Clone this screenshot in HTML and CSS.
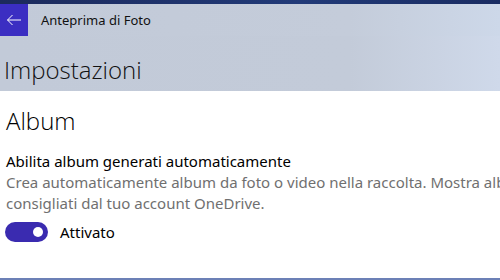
FILE: index.html
```html
<!DOCTYPE html>
<html lang="it">
<head>
    <meta charset="UTF-8">
    <meta name="viewport" content="width=device-width, initial-scale=1.0">
    <title>Impostazioni</title>
    <link rel="stylesheet" href="styles.css">
</head>
<body>
    <div class="top-strip"></div>
    <header class="title-bar">
        <button class="back-button" aria-label="Indietro">
            <svg width="16" height="12" viewBox="0 0 16 12">
                <path d="M15 6H1.5M6.5 1L1.5 6l5 5" fill="none" stroke="#fff" stroke-width="1"/>
            </svg>
        </button>
        <span class="app-title">Anteprima di Foto</span>
    </header>
    <div class="page-header">
        <h1>Impostazioni</h1>
    </div>
    <main class="content">
        <h2>Album</h2>
        <div class="setting">
            <p class="setting-label">Abilita album generati automaticamente</p>
            <p class="setting-desc">Crea automaticamente album da foto o video nella raccolta. Mostra album<br>consigliati dal tuo account OneDrive.</p>
            <label class="toggle-row">
                <span class="toggle"><span class="knob"></span></span>
                <span>Attivato</span>
            </label>
        </div>
    </main>
    <div class="bottom-line"></div>
</body>
</html>
```

FILE: styles.css
```css
html, body {
    margin: 0;
    height: 280px;
    overflow: hidden;
}
body {
    font-family: "Noto Sans", "Open Sans", sans-serif;
    background: #fff;
    color: #000;
    display: flex;
    flex-direction: column;
}
.top-strip {
    height: 4px;
    background: linear-gradient(90deg, #1c2a5c, #213a78 60%, #1a2c62);
}
.title-bar {
    display: flex;
    align-items: center;
    height: 32px;
    background: linear-gradient(90deg, #c2cad8, #c4ccda 70%, #cdd8e9);
}
.back-button {
    width: 28px;
    height: 32px;
    border: none;
    padding: 0;
    background: #3b2ec2;
    display: flex;
    align-items: center;
    justify-content: center;
}
.app-title {
    margin-left: 13px;
    font-size: 13px;
    color: #111;
}
.page-header {
    height: 55px;
    background: linear-gradient(90deg, #c2cad8, #c3cbd9 70%, #cfd9ea);
}
h1 {
    margin: 0;
    padding: 19px 0 0 4px;
    font-family: "Open Sans", "Noto Sans", sans-serif;
    font-size: 24px;
    font-weight: 300;
    line-height: 30px;
    color: #111;
}
.content {
    flex: 1;
    padding: 15px 0 0 6px;
}
h2 {
    margin: 0;
    font-family: "Open Sans", "Noto Sans", sans-serif;
    font-size: 24px;
    font-weight: 300;
    line-height: 30px;
}
.setting {
    margin-top: 15px;
}
.setting p {
    margin: 0;
    font-size: 15px;
    line-height: 21px;
    white-space: nowrap;
}
.setting-desc {
    color: #707070;
}
.toggle-row {
    display: flex;
    align-items: center;
    gap: 12px;
    margin-top: 8px;
    margin-left: -1px;
    font-size: 15px;
}
.toggle {
    width: 43px;
    height: 20px;
    border-radius: 10px;
    background: #3a2bb0;
    display: flex;
    align-items: center;
    justify-content: flex-end;
    padding-right: 5px;
    box-sizing: border-box;
}
.knob {
    width: 10px;
    height: 10px;
    border-radius: 50%;
    background: #fff;
}
.bottom-line {
    height: 2px;
    background: #6c80b6;
}
```
